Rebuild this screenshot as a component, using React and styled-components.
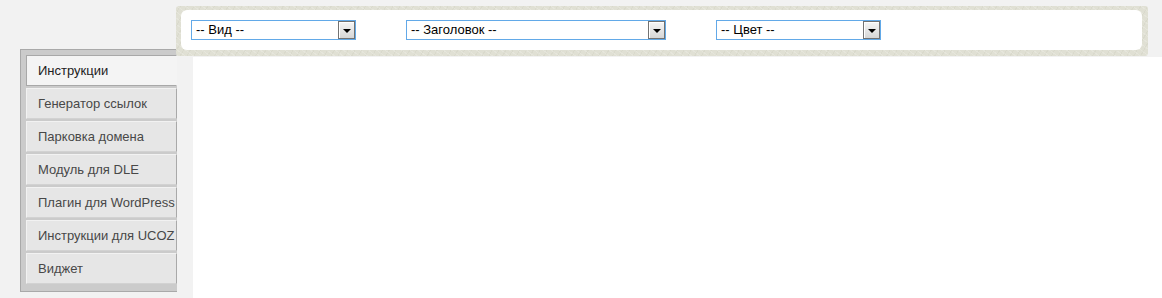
import React from 'react'
import styled, { createGlobalStyle } from 'styled-components'

const GlobalStyle = createGlobalStyle`
  html, body {
    margin: 0;
    padding: 0;
    background: #f2f2f2;
    font-family: 'Liberation Sans', Arial, sans-serif;
  }
`

const Page = styled.div`
  display: flex;
  min-height: 298px;
`

const LeftColumn = styled.div`
  flex-shrink: 0;
  width: 177px;
  padding: 49px 0 0 20px;
  box-sizing: border-box;
`

const Sidebar = styled.ul`
  list-style: none;
  margin: 0;
  width: 157px;
  box-sizing: border-box;
  padding: 5px 0 5px 5px;
  background: #cbcbcb;
  border: 1px solid #a9a9a9;
  border-right: none;
`

const MenuItem = styled.li`
  display: flex;
  align-items: center;
  height: 31px;
  margin-bottom: 2px;
  padding-left: 11px;
  box-sizing: border-box;
  font-size: 13px;
  white-space: nowrap;
  overflow: hidden;
  color: ${p => (p.$active ? '#222' : '#484848')};
  background: ${p => (p.$active ? '#f4f4f4' : '#e6e6e6')};
  border-top: 1px solid ${p => (p.$active ? '#a8a8a8' : '#f2f2f2')};
  border-left: 1px solid ${p => (p.$active ? '#a8a8a8' : '#f2f2f2')};
  border-right: 1px solid ${p => (p.$active ? '#f4f4f4' : '#a9a9a9')};
  border-bottom: 1px solid ${p => (p.$active ? '#a8a8a8' : '#d2d2d2')};
`

const RightColumn = styled.div`
  flex: 1;
  display: flex;
  flex-direction: column;
`

const Toolbar = styled.div`
  width: 972px;
  height: 50px;
  margin: 6px 0 0 -1px;
  padding: 4px 6px 6px 5px;
  box-sizing: border-box;
  border-radius: 3px;
  background-color: #e0e0d4;
  background-image:
    repeating-linear-gradient(37deg, rgba(255,255,255,0.18) 0 1px, transparent 1px 5px),
    repeating-linear-gradient(-61deg, rgba(170,170,150,0.12) 0 1px, transparent 1px 6px);
`

const ToolbarInner = styled.div`
  display: flex;
  gap: 50px;
  height: 100%;
  box-sizing: border-box;
  padding: 10px 10px;
  background: #fff;
  border-radius: 6px;
`

const Select = styled.div`
  display: flex;
  width: ${p => p.$width}px;
  height: 20px;
  box-sizing: border-box;
  border: 1px solid #62a9e8;
  background: #fff;
`

const SelectValue = styled.div`
  flex: 1;
  padding-left: 4px;
  font-size: 13px;
  line-height: 18px;
  color: #000;
  white-space: nowrap;
`

const SelectButton = styled.div`
  display: flex;
  align-items: center;
  justify-content: center;
  width: 17px;
  height: 18px;
  box-sizing: border-box;
  border: 1px solid #727272;
  background: linear-gradient(#f6f6f6, #d6d6d6);
  box-shadow: inset 1px 1px 0 #fff;
`

const Arrow = styled.span`
  width: 0;
  height: 0;
  margin-top: 1px;
  border-left: 4px solid transparent;
  border-right: 4px solid transparent;
  border-top: 4px solid #000;
`

const Content = styled.div`
  flex: 1;
  margin: 1px 0 0 16px;
  background: #fff;
`

const menu = [
  'Инструкции',
  'Генератор ссылок',
  'Парковка домена',
  'Модуль для DLE',
  'Плагин для WordPress',
  'Инструкции для UCOZ',
  'Виджет'
]

const selects = [
  { label: '-- Вид --', width: 165 },
  { label: '-- Заголовок --', width: 260 },
  { label: '-- Цвет --', width: 165 }
]

const App = () => {
  return (
    <Page>
      <GlobalStyle />
      <LeftColumn>
        <Sidebar>
          {menu.map((item, i) => (
            <MenuItem key={item} $active={i === 0}>{item}</MenuItem>
          ))}
        </Sidebar>
      </LeftColumn>
      <RightColumn>
        <Toolbar>
          <ToolbarInner>
            {selects.map(s => (
              <Select key={s.label} $width={s.width}>
                <SelectValue>{s.label}</SelectValue>
                <SelectButton><Arrow /></SelectButton>
              </Select>
            ))}
          </ToolbarInner>
        </Toolbar>
        <Content />
      </RightColumn>
    </Page>
  )
}

export default App
